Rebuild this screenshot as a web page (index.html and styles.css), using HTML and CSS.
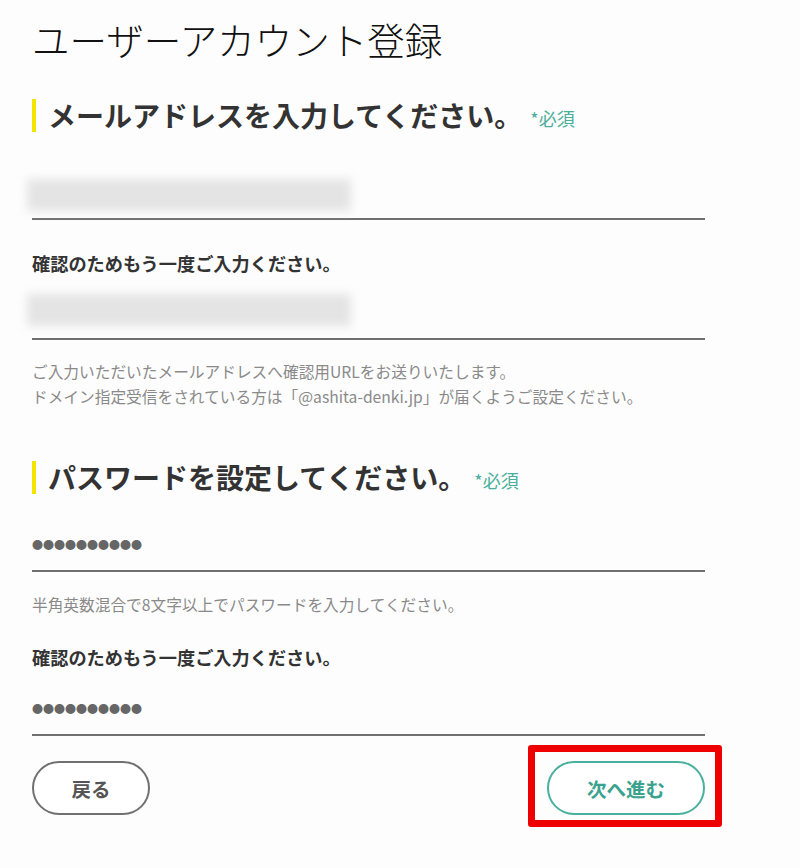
FILE: index.html
```html
<!DOCTYPE html>
<html lang="ja">
<head>
    <meta charset="UTF-8">
    <meta name="viewport" content="width=device-width, initial-scale=1.0">
    <title>ユーザーアカウント登録</title>
    <link rel="stylesheet" href="styles.css">
</head>
<body>
    <main class="page">
        <h1 class="title">ユーザーアカウント登録</h1>

        <!-- Email -->
        <section class="block">
            <h2 class="section-head"><span class="section-text">メールアドレスを入力してください。</span><span class="req">*必須</span></h2>
            <div class="field field-mail"><div class="blur"></div></div>
            <p class="label">確認のためもう一度ご入力ください。</p>
            <div class="field field-mail2"><div class="blur"></div></div>
            <p class="note">ご入力いただいたメールアドレスへ確認用URLをお送りいたします。<br>ドメイン指定受信をされている方は「@ashita-denki.jp」が届くようご設定ください。</p>
        </section>

        <!-- Password -->
        <section class="block block-pass">
            <h2 class="section-head"><span class="section-text">パスワードを設定してください。</span><span class="req">*必須</span></h2>
            <div class="field field-pass"><span class="dots">●●●●●●●●●●</span></div>
            <p class="note note-pass">半角英数混合で8文字以上でパスワードを入力してください。</p>
            <p class="label label-pass">確認のためもう一度ご入力ください。</p>
            <div class="field field-pass2"><span class="dots">●●●●●●●●●●</span></div>
        </section>

        <div class="actions">
            <button class="btn btn-back">戻る</button>
            <div class="highlight">
                <button class="btn btn-next">次へ進む</button>
            </div>
        </div>
    </main>
</body>
</html>
```

FILE: styles.css
```css
body {
    margin: 0;
    background-color: #fdfdfd;
    font-family: "Noto Sans CJK JP", "Noto Sans", sans-serif;
    color: #333;
}
.page {
    width: 673px;
    padding: 0 0 40px 32px;
}
.title {
    margin: 0;
    padding-top: 17px;
    font-size: 37.5px;
    font-weight: 300;
    line-height: 44px;
    color: #111;
}
.block {
    margin-top: 38px;
}
.section-head {
    margin: 0;
    display: flex;
    align-items: center;
}
.section-text {
    display: inline-block;
    border-left: 4px solid #f4e500;
    padding-left: 12px;
    font-size: 28px;
    line-height: 33px;
    font-weight: bold;
    color: #333;
}
.req {
    margin-left: 8px;
    margin-top: 5px;
    font-size: 18px;
    font-weight: normal;
    color: #4aae9c;
}
.field {
    border-bottom: 2px solid #707070;
    display: flex;
    align-items: flex-end;
}
.blur {
    width: 324px;
    height: 32px;
    margin-left: -5px;
    background-color: #e4e4e4;
    filter: blur(5px);
}
.field-mail {
    padding-top: 47px;
    padding-bottom: 7px;
}
.field-mail2 {
    padding-top: 18px;
    padding-bottom: 12px;
}
.label {
    margin: 31px 0 0;
    font-size: 18.2px;
    line-height: 25px;
    font-weight: bold;
    color: #333;
}
.note {
    margin: 19px 0 0;
    font-size: 15.7px;
    line-height: 25px;
    color: #8a8a8a;
}
.block-pass {
    margin-top: 52px;
}
.dots {
    font-size: 11px;
    line-height: 11px;
    color: #666;
}
.field-pass {
    padding-top: 45px;
    padding-bottom: 20px;
}
.note-pass {
    margin-top: 20px;
}
.label-pass {
    margin-top: 28px;
}
.field-pass2 {
    padding-top: 33px;
    padding-bottom: 20px;
}
.actions {
    display: flex;
    justify-content: space-between;
    align-items: flex-start;
    margin-top: 25px;
}
.btn {
    height: 54px;
    border-radius: 27px;
    background: #fff;
    font-family: inherit;
    font-size: 19.5px;
    font-weight: bold;
    cursor: pointer;
}
.btn-back {
    width: 118px;
    border: 2px solid #707070;
    color: #555;
}
.highlight {
    display: flex;
    margin: -16px -17px 0 0;
    padding: 9px 10px 5px 12px;
    border: 7px solid #ee0000;
    border-radius: 3px;
}
.btn-next {
    width: 158px;
    border: 2px solid #48b09c;
    color: #3aa28e;
}
```
